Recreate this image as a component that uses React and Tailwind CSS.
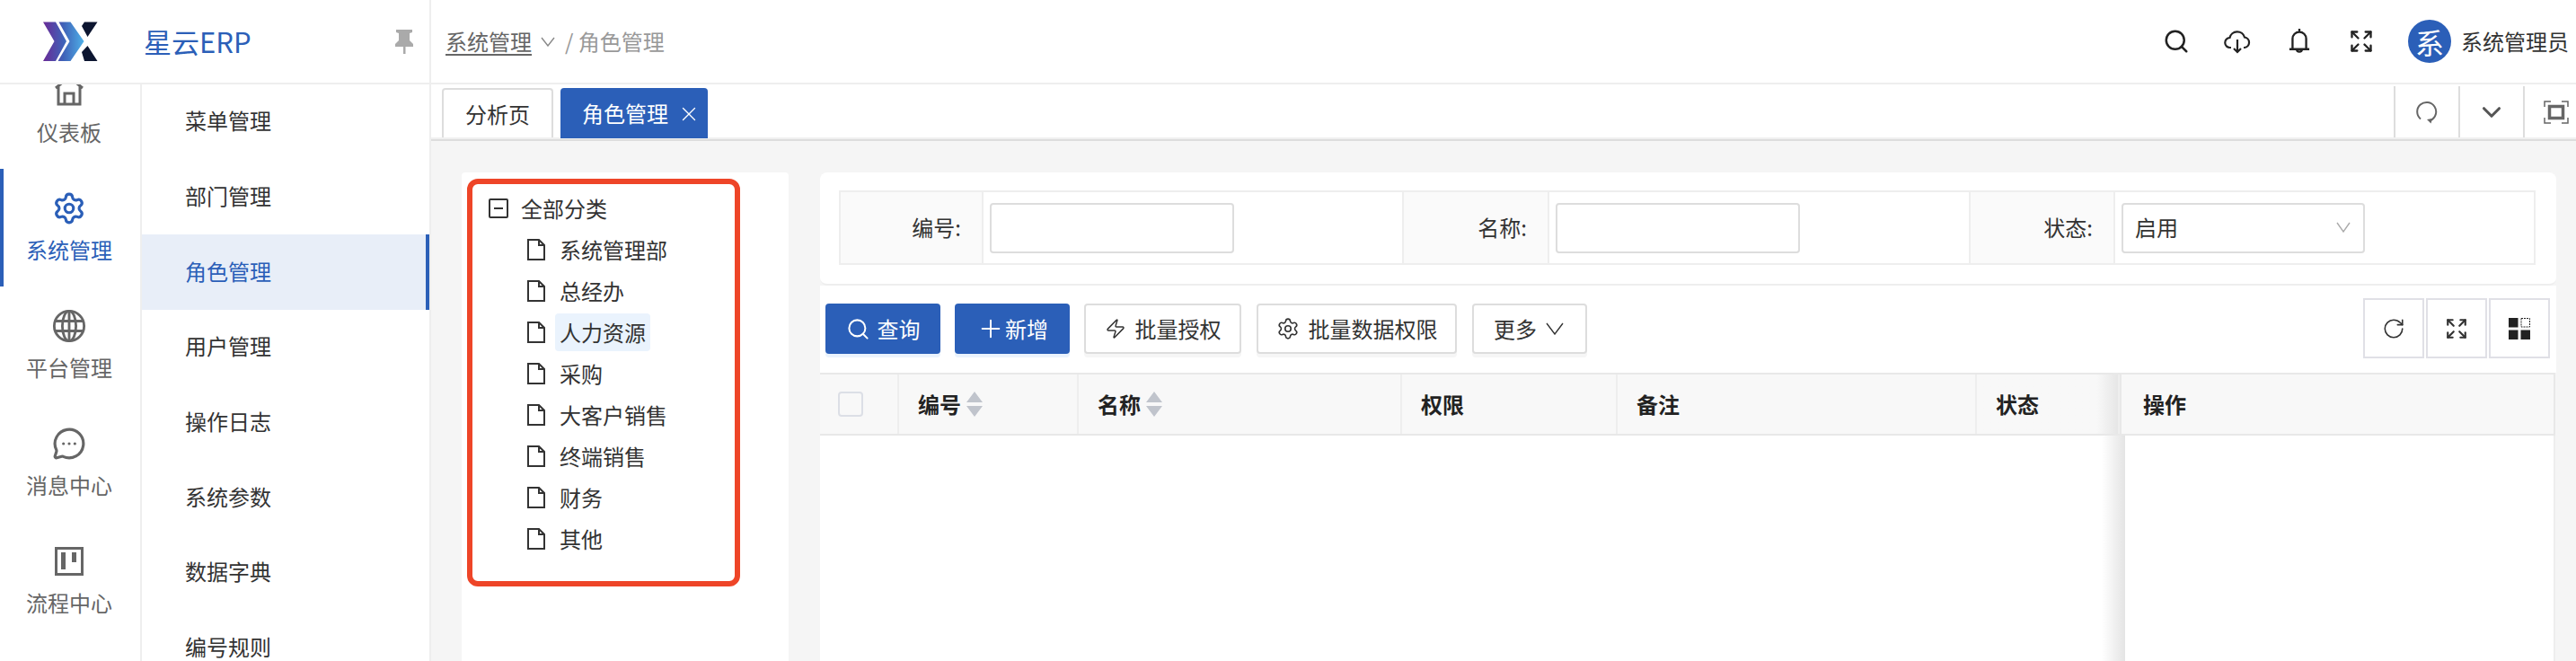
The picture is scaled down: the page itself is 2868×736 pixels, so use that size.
// App.jsx - 星云ERP role management page
import React from 'react';
import {
  Search, Plus, Zap, Settings, MessageCircleMore, ChevronDown, X, RotateCw, Expand,
} from 'lucide-react';

const deptList = ['系统管理部', '总经办', '人力资源', '采购', '大客户销售', '终端销售', '财务', '其他'];
const subMenu = ['菜单管理', '部门管理', '角色管理', '用户管理', '操作日志', '系统参数', '数据字典', '编号规则'];

const Logo = () => (
  <svg width="80" height="60" viewBox="0 0 80 60">
    <defs>
      <linearGradient id="logoGrad" x1="0" y1="0" x2="1" y2="0">
        <stop offset="0" stopColor="#6a2a96" />
        <stop offset="0.5" stopColor="#3f62b8" />
        <stop offset="1" stopColor="#4fb0e8" />
      </linearGradient>
    </defs>
    <path
      d="M8 8.500h14L34 30 22 52H8l12.500-22zM25.500 8.500h13L53.500 30l-15 22H24.500l13-22z"
      fill="url(#logoGrad)"
    />
    <path d="M51 13l3-4.500h14.500L57.500 25zM57.500 35l11 17H54l-3-10z" fill="#0c1530" />
  </svg>
);

const HomeIcon = () => (
  <svg width="36" height="36" viewBox="0 0 36 36" fill="none" stroke="#666" strokeWidth="3">
    <path d="M18 3L3 15M18 3l15 12M6 13v20h24V13M13 33V21h10v12" />
  </svg>
);

const GlobeIcon = () => (
  <svg width="38" height="38" viewBox="0 0 24 24" fill="none" stroke="#666" strokeWidth="1.800">
    <circle cx="12" cy="12" r="10.500" />
    <ellipse cx="12" cy="12" rx="4.800" ry="10.500" />
    <path d="M12 1.500v21M2.500 8.500h19M2.500 15.500h19" />
  </svg>
);

const BoardIcon = () => (
  <svg width="32" height="34" viewBox="0 0 32 34" fill="#666">
    <path d="M0 1h32v32H0zm3 3v26h26V4z" fillRule="evenodd" />
    <rect x="7" y="7" width="5" height="19" />
    <rect x="19" y="7" width="5" height="11" />
  </svg>
);

const PinIcon = () => (
  <svg width="20" height="27" viewBox="0 0 20 27" fill="#aaa">
    <path d="M1 0h18v3l-3 1v8l4 4v3H0v-3l4-4V4L1 3z" />
    <rect x="9" y="18" width="2.500" height="9" />
  </svg>
);

const BellIcon = () => (
  <svg width="28" height="32" viewBox="0 0 24 27" fill="none" stroke="#222" strokeWidth="2">
    <path d="M5.500 21V11a6.500 6.500 0 0 1 13 0v10M2.500 21h19M12 1.500v3M9.500 21a2.500 2.500 0 0 0 5 0" />
  </svg>
);

const CloudIcon = () => (
  <svg width="30" height="28" viewBox="0 0 30 28" fill="none" stroke="#222" strokeWidth="2.200">
    <path d="M8 21H7a5.500 5.500 0 0 1-.5-11A8.500 8.500 0 0 1 23 9.500 5.800 5.800 0 0 1 23 21h-1" />
    <path d="M15 12v14M11 22l4 4 4-4" />
  </svg>
);

const TabRefreshIcon = () => (
  <svg width="24" height="26" viewBox="0 0 24 26" fill="none" stroke="#666" strokeWidth="2">
    <path d="M5 20.500A10.500 10.500 0 1 1 16 22" />
    <path d="M12 21l6-1-1.500 5.500z" fill="#666" stroke="none" />
  </svg>
);

const FullIcon = () => (
  <svg width="28" height="26" viewBox="0 0 28 26" fill="none" stroke="#666">
    <path d="M1 7V1h7M20 1h7v6M27 19v6h-7M8 25H1v-6" strokeWidth="1.500" />
    <rect x="6.500" y="6.500" width="15" height="13" strokeWidth="3.500" />
  </svg>
);

const FileIcon = () => (
  <svg width="20" height="24" viewBox="0 0 20 24" fill="none" stroke="#333" strokeWidth="2" className="shrink-0">
    <path d="M1 1h12l6 6v16H1zM13 1v6h6" />
  </svg>
);

const MinusBox = () => (
  <svg width="22" height="22" viewBox="0 0 22 22" fill="none" stroke="#333" strokeWidth="2" className="shrink-0">
    <rect x="1" y="1" width="20" height="20" rx="1" />
    <path d="M6 11h10" />
  </svg>
);

const SortCarets = () => (
  <svg width="18" height="28" viewBox="0 0 18 28" fill="#c0c4cc" className="ml-[6px]">
    <path d="M9 0l9 12H0zM0 16h18L9 28z" />
  </svg>
);

const LayoutIcon = () => (
  <svg width="24" height="24" viewBox="0 0 24 24" fill="#222">
    <rect x="0" y="0" width="10.500" height="10.500" />
    <rect x="0" y="13.500" width="10.500" height="10.500" />
    <rect x="13.500" y="13.500" width="10.500" height="10.500" />
    <rect x="14" y="0.500" width="9.500" height="9.500" fill="none" stroke="#222" strokeDasharray="2 1" />
  </svg>
);

// thin wide chevron used by the breadcrumb, select and more button
const VIcon = ({ w, h, color, className }) => (
  <svg width={w} height={h} viewBox={`0 0 ${w} ${h}`} fill="none" stroke={color} strokeWidth="1.400" className={className}>
    <path d={`M1 1L${w / 2} ${h - 1}L${w - 1} 1`} />
  </svg>
);

const NavItem = ({ icon, label, active }) => (
  <div
    className={`h-[131px] shrink-0 flex flex-col items-center pt-[26px] border-l-4 pr-[6px] ${
      active ? 'border-[#2b5fb8] text-[#2b5fb8]' : 'border-transparent text-[#666]'
    }`}
  >
    <div className="h-[36px] flex items-center justify-center">{icon}</div>
    <div className="mt-[11px] leading-[34px]">{label}</div>
  </div>
);

const Filter = ({ label, labelWidth, children }) => (
  <div className="flex items-center border-r-2 border-[#eee] last:border-r-0">
    <div className={`${labelWidth} h-full bg-[#fafafa] border-r-2 border-[#eee] flex items-center justify-end pr-[23px] pb-[2px] text-[#333]`}>
      {label}:
    </div>
    <div className="pl-[7px]">{children}</div>
  </div>
);

const OutlineButton = ({ className, children }) => (
  <div
    className={`h-[56px] mt-[20px] flex items-center justify-center gap-[10px] bg-white border-2 border-[#ddd] rounded-[4px] shadow-[0_4px_0_#f6f6f6] text-[#333] ${className}`}
  >
    {children}
  </div>
);

const PrimaryButton = ({ className, children }) => (
  <div
    className={`h-[56px] mt-[20px] flex items-center justify-center gap-[10px] bg-[#2b5fb8] rounded-[4px] shadow-[0_4px_0_#eaf3fd] text-white ${className}`}
  >
    {children}
  </div>
);

const IconBox = ({ children }) => (
  <div className="w-[68px] h-[67px] mt-[14px] flex items-center justify-center border-2 border-[#e0e0e6]">{children}</div>
);

const HeadCell = ({ className, sort, children }) => (
  <div className={`h-full flex items-center pl-[21px] border-r-2 border-[#eee] font-bold text-[#222] ${className}`}>
    {children}
    {sort && <SortCarets />}
  </div>
);

const App = () => {
  return (
    <div className="w-[2868px] h-[736px] overflow-hidden flex flex-col bg-[#f5f5f5] text-[24px] font-['Noto_Sans_CJK_SC',sans-serif]">
      {/* Header */}
      <div className="h-[94px] shrink-0 flex bg-white border-b-2 border-[#eee]">
        <div className="w-[480px] flex items-center border-r-2 border-[#eee] pl-[40px] pr-[18px]">
          <Logo />
          <div className="ml-[40px] text-[31px] text-[#2b5fb8]">星云ERP</div>
          <div className="ml-auto"><PinIcon /></div>
        </div>
        <div className="flex-1 flex items-center pl-[16px] pr-[8px]">
          <span className="text-[#666] underline underline-offset-4">系统管理</span>
          <VIcon w={16} h={11} color="#888" className="ml-[10px]" />
          <span className="text-[#999] ml-[11px]">/ 角色管理</span>
          <div className="ml-auto flex items-center">
            <Search size={30} strokeWidth={2} className="text-[#222]" />
            <div className="ml-[38px]"><CloudIcon /></div>
            <div className="ml-[40px]"><BellIcon /></div>
            <Expand size={28} strokeWidth={2} className="text-[#222] ml-[41px]" />
            <div className="ml-[38px] w-[48px] h-[48px] rounded-full bg-[#2b5fb8] text-white text-[32px] flex items-center justify-center">
              系
            </div>
            <span className="ml-[11px] text-[#333]">系统管理员</span>
          </div>
        </div>
      </div>

      <div className="flex-1 flex min-h-0">
        {/* Main nav */}
        <div className="w-[158px] shrink-0 bg-white border-r-2 border-[#eee] flex flex-col overflow-hidden">
          <div className="-mt-[37px]">
            <NavItem icon={<HomeIcon />} label="仪表板" />
            <NavItem icon={<Settings size={38} strokeWidth={2} />} label="系统管理" active />
            <NavItem icon={<GlobeIcon />} label="平台管理" />
            <NavItem icon={<MessageCircleMore size={38} strokeWidth={2} />} label="消息中心" />
            <NavItem icon={<BoardIcon />} label="流程中心" />
          </div>
        </div>

        {/* Sub menu */}
        <div className="w-[322px] shrink-0 bg-white border-r-2 border-[#eee] overflow-hidden">
          {subMenu.map((name) => (
            <div
              key={name}
              className={`h-[83.7px] flex items-center pl-[48px] pb-[3px] ${
                name === '角色管理'
                  ? 'bg-[#e8eef8] text-[#2b5fb8] border-r-4 border-[#2b5fb8]'
                  : 'text-[#333]'
              }`}
            >
              {name}
            </div>
          ))}
        </div>

        <div className="flex-1 flex flex-col min-w-0">
          {/* Tabs */}
          <div className="h-[63px] shrink-0 bg-white border-b-2 border-[#ddd]">
            <div className="h-full border-b-2 border-[#f0f0f0] flex pl-[12px]">
              <div className="w-[124px] h-[55px] mt-[4px] flex items-center justify-center bg-white border-2 border-b-0 border-[#ddd] rounded-t-[4px] text-[#333]">
                分析页
              </div>
              <div className="w-[164px] h-[56px] mt-[4px] ml-[8px] pl-[24px] flex items-center bg-[#2b5fb8] rounded-t-[4px] text-white">
                角色管理
                <X size={26} strokeWidth={1.2} className="ml-[10px] mt-[2px]" />
              </div>
              <div className="ml-auto flex">
                <div className="w-[72px] mt-[2px] flex items-center justify-center border-l-2 border-[#ddd]"><TabRefreshIcon /></div>
                <div className="w-[72px] mt-[2px] flex items-center justify-center border-l-2 border-[#ddd]">
                  <ChevronDown size={34} strokeWidth={2.2} className="text-[#555]" />
                </div>
                <div className="w-[59px] mt-[2px] flex items-center justify-center pl-[12px] border-l-2 border-[#ddd]"><FullIcon /></div>
              </div>
            </div>
          </div>

          {/* Page body */}
          <div className="flex-1 flex pl-[34px] pt-[35px] gap-[35px] min-h-0">
            {/* Dept tree */}
            <div className="w-[364px] shrink-0 bg-white pl-[6px] pt-[7px] rounded-t-[4px]">
              <div className="w-[304px] h-[454px] border-[6px] border-[#ee4528] rounded-[12px] pt-[4px] text-[#333]">
                <div className="h-[46px] flex items-center pl-[18px] gap-[14px]">
                  <MinusBox />
                  全部分类
                </div>
                {deptList.map((name) => (
                  <div key={name} className="h-[46px] flex items-center pl-[61px]">
                    <FileIcon />
                    <span
                      className={`ml-[11px] px-[5px] h-[42px] flex items-center rounded-[4px] ${
                        name === '人力资源' ? 'bg-[#eaf3fd]' : ''
                      }`}
                    >
                      {name}
                    </span>
                  </div>
                ))}
              </div>
            </div>

            {/* Right panel */}
            <div className="w-[1933px] shrink-0 flex flex-col min-h-0">
              <div className="h-[126px] shrink-0 bg-white rounded-[8px] border-b-2 border-[#eee] pl-[21px] pt-[20px]">
                <div className="w-[1889px] h-[83px] grid grid-cols-[627px_631px_1fr] border-2 border-[#eee]">
                  <Filter label="编号" labelWidth="w-[159px]">
                    <div className="w-[272px] h-[56px] bg-white border-2 border-[#ddd] rounded-[4px]" />
                  </Filter>
                  <Filter label="名称" labelWidth="w-[162px]">
                    <div className="w-[272px] h-[56px] bg-white border-2 border-[#ddd] rounded-[4px]" />
                  </Filter>
                  <Filter label="状态" labelWidth="w-[161px]">
                    <div className="w-[271px] h-[56px] bg-white border-2 border-[#ddd] rounded-[4px] flex items-center justify-between pl-[13px] pr-[14px] pb-[2px] text-[#333]">
                      启用
                      <VIcon w={16} h={12} color="#aaa" />
                    </div>
                  </Filter>
                </div>
              </div>

              {/* Toolbar */}
              <div className="h-[97px] shrink-0 bg-white flex pl-[6px] pr-[7px]">
                <PrimaryButton className="w-[128px]">
                  <Search size={27} strokeWidth={1.8} className="-mr-[2px]" />
                  查询
                </PrimaryButton>
                <PrimaryButton className="w-[128px] ml-[16px]">
                  <Plus size={32} strokeWidth={1.5} className="-mr-[10px]" />
                  新增
                </PrimaryButton>
                <OutlineButton className="w-[175px] ml-[16px]">
                  <Zap size={24} strokeWidth={1.5} />
                  批量授权
                </OutlineButton>
                <OutlineButton className="w-[223px] ml-[17px]">
                  <Settings size={26} strokeWidth={1.5} />
                  批量数据权限
                </OutlineButton>
                <OutlineButton className="w-[128px] ml-[17px] pr-[2px]">
                  更多
                  <VIcon w={20} h={14} color="#333" />
                </OutlineButton>
                <div className="ml-auto flex gap-[2px]">
                  <IconBox><RotateCw size={26} strokeWidth={1.5} className="text-[#333]" /></IconBox>
                  <IconBox><Expand size={26} strokeWidth={2} className="text-[#333]" /></IconBox>
                  <IconBox><LayoutIcon /></IconBox>
                </div>
              </div>

              {/* Table */}
              <div className="flex-1 flex flex-col min-h-0 w-[1932px] bg-white">
                <div className="h-[70px] shrink-0 flex bg-[#f8f8f8] border-t-2 border-b-2 border-[#e8e8e8]">
                  <div className="w-[88px] h-full flex items-center pl-[20px] border-r-2 border-[#eee]">
                    <div className="w-[28px] h-[28px] bg-[#f8f8f8] border-2 border-[#dcdfe6] rounded-[4px]" />
                  </div>
                  <HeadCell className="w-[200px]" sort>编号</HeadCell>
                  <HeadCell className="w-[360px]" sort>名称</HeadCell>
                  <HeadCell className="w-[240px]">权限</HeadCell>
                  <HeadCell className="w-[400px]">备注</HeadCell>
                  <HeadCell className="w-[159px] bg-linear-to-r from-[#f8f8f8] from-85% to-[#e6e6e6]">状态</HeadCell>
                  <div className="flex-1 flex items-center pl-[24px] border-l-2 border-r-2 border-[#e8e8e8] font-bold text-[#222]">操作</div>
                </div>
                <div className="flex-1 flex">
                  <div className="flex-1" />
                  <div className="w-[26px] bg-linear-to-r from-white to-[#e4e4e4]" />
                  <div className="w-[479px] border-r-2 border-[#eee]" />
                </div>
              </div>
            </div>
          </div>
        </div>
      </div>
    </div>
  );
};

export default App;
